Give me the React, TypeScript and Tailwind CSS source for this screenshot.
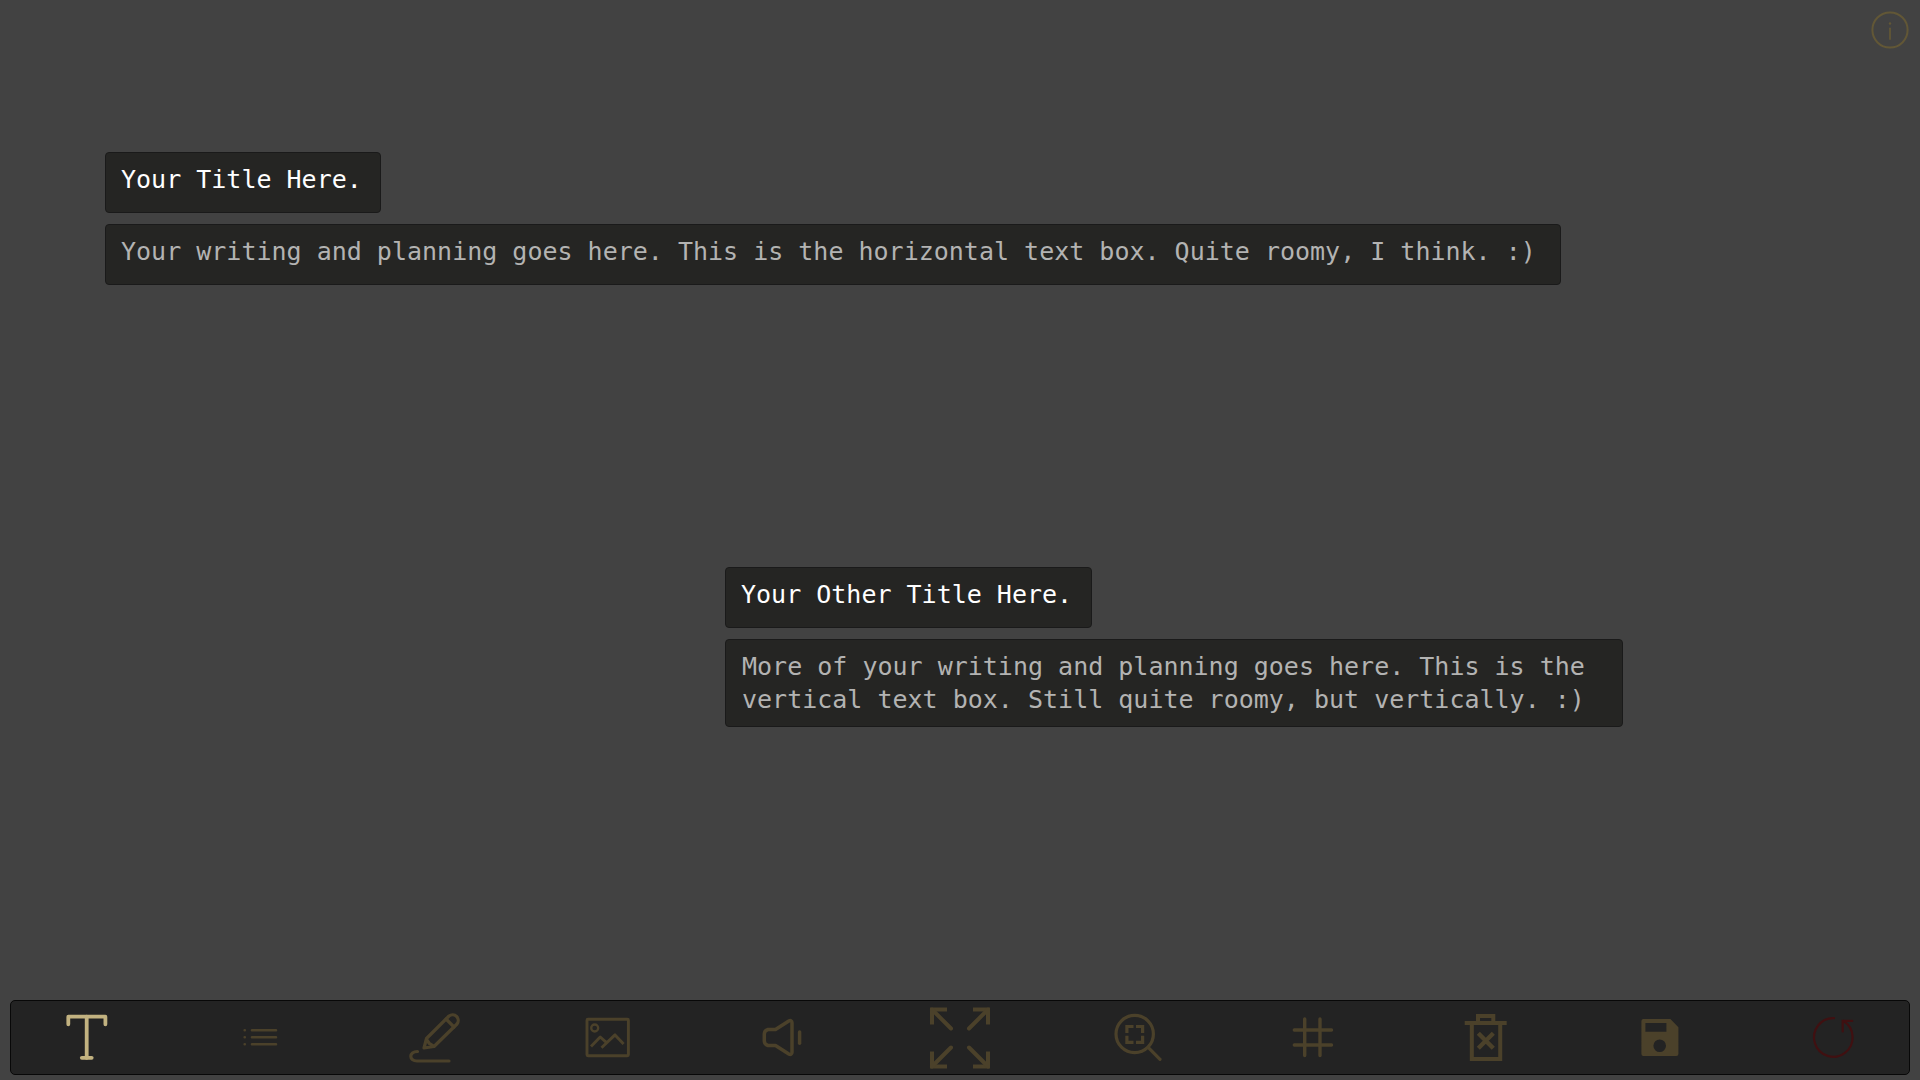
import { useState } from "react";
import type { ReactNode } from "react";

interface Tool {
  id: string;
  label: string;
  color: string;
  size?: "large";
  icon: ReactNode;
}

const DIM = "text-[#4b412a]";

const tools: Tool[] = [
  {
    id: "text",
    label: "Text",
    color: "text-[#c2b280]",
    icon: (
      <g strokeWidth="3.8">
        <path d="M7.3 12.3V4.7h37.1v7.6" />
        <path d="M25.7 4.7v41.1" />
        <path d="M20.8 45.8h9.900" />
      </g>
    ),
  },
  {
    id: "list",
    label: "List",
    color: DIM,
    icon: (
      <g strokeWidth="2.6">
        <path d="M18 18.3h24M18 25.3h24M18 32.3h24" />
        <path d="M10.7 18.3h.1M10.7 25.3h.1M10.7 32.3h.1" />
      </g>
    ),
  },
  {
    id: "draw",
    label: "Draw",
    color: DIM,
    icon: (
      <g strokeWidth="3.2">
        <path d="M16 36l2.5-9.5L41 4a5.7 5.7 0 0 1 8 8L26 34.500z" />
        <path d="M38 7l8 8" />
        <path d="M18.500 27.500l2.700 3.800 4.300 2.700" />
        <path d="M9.500 39.500C5 39.500 2.800 41.800 2.800 44.300S5 49 9 49h32" />
      </g>
    ),
  },
  {
    id: "image",
    label: "Image",
    color: DIM,
    icon: (
      <g strokeWidth="2.9">
        <rect x="6" y="7.300" width="41.400" height="36.400" rx="1" />
        <circle cx="13.700" cy="16" r="3.500" strokeWidth="2.300" />
        <path d="M10 34.500l9.200-9.500 6.300 5.700M20.500 35.800L34 22.900l8.600 9.100" strokeLinecap="butt" />
      </g>
    ),
  },
  {
    id: "audio",
    label: "Audio",
    color: DIM,
    icon: (
      <g strokeWidth="3.500">
        <path d="M13 17.500h7.500L33.800 9c1.700-1 3.200-.2 3.200 1.800v29.400c0 2-1.500 2.800-3.200 1.800l-13.300-8.500H13q-3.700-1.200-3.700-4.500v-7q0-3.300 3.700-4.500z" />
        <path d="M44.600 20v11.200" />
      </g>
    ),
  },
  {
    id: "expand",
    label: "Expand",
    color: DIM,
    size: "large",
    icon: (
      <g strokeWidth="4">
        <path d="M4 16.500V3.500h13M47 3.500h13v13M4 47.500v13h13M47 60.500h13v-13" strokeLinecap="square" strokeLinejoin="miter" />
        <path d="M4 3.500l19 19M60 3.500l-19 19M4 60.500l19-19M60 60.500l-19-19" />
      </g>
    ),
  },
  {
    id: "zoom",
    label: "Zoom to fit",
    color: DIM,
    icon: (
      <g strokeWidth="3.200">
        <circle cx="21.700" cy="22" r="18.700" />
        <path d="M35.400 35.700L47 47.300" />
        <path d="M13.900 21v-6.500h6.600M23 14.500h6.600V21M29.600 23.800v6.500H23M20.500 30.300h-6.600v-6.500" strokeLinecap="butt" strokeLinejoin="miter" />
      </g>
    ),
  },
  {
    id: "grid",
    label: "Grid",
    color: DIM,
    icon: <path d="M17.700 7v36.500M33 7v36.500M7.300 18h37.200M7.300 33h37.200" strokeWidth="3.400" />,
  },
  {
    id: "delete",
    label: "Delete",
    color: DIM,
    icon: (
      <g strokeWidth="4" strokeLinecap="butt" strokeLinejoin="miter">
        <path d="M4.700 11h42M18 10V4h15.300v6" />
        <path d="M11.800 12v35h28.400V12" />
        <path d="M18.300 21.300l15 15M33.300 21.300l-15 15" strokeWidth="4.400" />
      </g>
    ),
  },
  {
    id: "save",
    label: "Save",
    color: DIM,
    icon: (
      <path
        d="M9.400 7h27l8 8.300V42a2 2 0 0 1-2 2h-33a2 2 0 0 1-2-2V9a2 2 0 0 1 2-2zM11.400 11v8.700h21V11zM25.700 27.400a6.300 6.300 0 1 0 0 12.600 6.300 6.300 0 1 0 0-12.600z"
        fill="currentColor"
        fillRule="evenodd"
        stroke="none"
      />
    ),
  },
  {
    id: "reset",
    label: "Reset",
    color: "text-[#401011]",
    icon: (
      <g strokeWidth="2.200">
        <path d="M27 6.100A19.300 19.300 0 1 0 36.500 9" />
        <path d="M45.200 8.900h-9.500v10.500" strokeLinejoin="miter" />
      </g>
    ),
  },
];

function Toolbar() {
  const [active, setActive] = useState("text");

  return (
    <nav
      aria-label="Tools"
      className="mx-2.5 mb-[5px] flex h-[75px] items-center justify-between rounded-[5px] border border-[#080808] bg-[#232323] px-[50px]"
    >
      {tools.map((tool) => (
        <button
          key={tool.id}
          type="button"
          aria-label={tool.label}
          aria-pressed={active === tool.id}
          onClick={() => setActive(tool.id)}
          className={`shrink-0 cursor-pointer ${tool.color}`}
        >
          <svg
            viewBox={tool.size === "large" ? "0 0 64 64" : "0 0 52 52"}
            className={tool.size === "large" ? "size-16" : "size-13"}
            fill="none"
            stroke="currentColor"
            strokeLinecap="round"
            strokeLinejoin="round"
          >
            {tool.icon}
          </svg>
        </button>
      ))}
    </nav>
  );
}

const BOX =
  "block rounded-[4px] border border-[#1a1a1a] bg-[#252523] pt-2.5 text-[25px] leading-[33px] outline-none";

export default function App() {
  return (
    <div className="flex h-screen flex-col overflow-hidden bg-[#424242] font-['DejaVu_Sans_Mono',monospace]">
      <main className="relative flex-1">
        <button
          type="button"
          aria-label="Info"
          className="absolute top-2.5 right-2.5 cursor-pointer text-[#625736]"
        >
          <svg viewBox="0 0 40 40" className="size-10" fill="none" stroke="currentColor" strokeLinecap="round">
            <circle cx="20" cy="20" r="17.600" strokeWidth="2" />
            <path d="M20 18.300v10.700" strokeWidth="1.800" />
            <path d="M20 13.500v.1" strokeWidth="2.400" />
          </svg>
        </button>

        {/* Horizontal note */}
        <section className="absolute top-[152px] left-[105px] flex flex-col items-start gap-[11px]">
          <input
            aria-label="Title"
            defaultValue="Your Title Here."
            className={`${BOX} w-[276px] pb-4 pl-[15px] text-white`}
          />
          <input
            aria-label="Note"
            defaultValue="Your writing and planning goes here. This is the horizontal text box. Quite roomy, I think. :)"
            className={`${BOX} w-[1456px] pb-4 pl-[15px] text-[#b3b3b2]`}
          />
        </section>

        {/* Vertical note */}
        <section className="absolute top-[567px] left-[725px] flex flex-col items-start gap-[11px]">
          <input
            aria-label="Other title"
            defaultValue="Your Other Title Here."
            className={`${BOX} w-[367px] pb-4 pl-[15px] text-white`}
          />
          <textarea
            aria-label="Other note"
            rows={2}
            defaultValue="More of your writing and planning goes here. This is the vertical text box. Still quite roomy, but vertically. :)"
            className={`${BOX} w-[898px] resize-none overflow-hidden pr-6 pb-2.5 pl-4 text-[#b3b3b2]`}
          />
        </section>
      </main>

      <Toolbar />
    </div>
  );
}
